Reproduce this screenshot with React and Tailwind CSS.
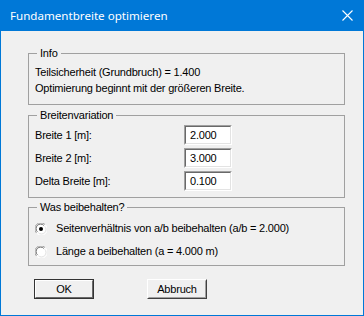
import React from "react";

const body = { fontFamily: '"Liberation Sans", Arial, sans-serif' };

function Radio({ checked }) {
  return (
    <svg width="12" height="12" viewBox="0 0 12 12" className="shrink-0">
      <circle cx="6" cy="6" r="5.5" fill="#fff" />
      <path d="M1.5 10 A5.5 5.5 0 0 1 10 1.5" stroke="#a0a0a0" strokeWidth="1" fill="none" />
      <path d="M2.4 8.8 A4.5 4.5 0 0 1 8.8 2.4" stroke="#696969" strokeWidth="1" fill="none" />
      <path d="M10.5 2 A5.5 5.5 0 0 1 2 10.5" stroke="#ffffff" strokeWidth="1" fill="none" />
      <path d="M9.6 3.2 A4.5 4.5 0 0 1 3.2 9.6" stroke="#e3e3e3" strokeWidth="1" fill="none" />
      {checked && <circle cx="6" cy="6" r="2" fill="#000" />}
    </svg>
  );
}

function Field({ value }) {
  return (
    <div className="h-[20px] w-[48px] border border-t-[#a0a0a0] border-l-[#a0a0a0] border-b-white border-r-white">
      <div className="h-full w-full border border-t-[#696969] border-l-[#696969] border-b-[#e3e3e3] border-r-[#e3e3e3] bg-white pl-[4px] text-[11px] leading-[16px] text-black">
        {value}
      </div>
    </div>
  );
}

export default function App() {
  return (
    <div className="w-[364px] h-[316px] flex flex-col bg-[#f0f0f0]" style={body}>
      <div className="h-[31px] shrink-0 bg-[#0078d7] flex items-center justify-between pl-[10px] pr-[10px] text-white">
        <span className="text-[11.6px]" style={{ fontFamily: '"Noto Sans", sans-serif' }}>
          Fundamentbreite optimieren
        </span>
        <svg width="11" height="11" viewBox="0 0 11 11" className="mr-[1px]">
          <path d="M0.5 0.5 L10.5 10.5 M10.5 0.5 L0.5 10.5" stroke="#fff" strokeWidth="1.1" />
        </svg>
      </div>
      <div className="flex-1 border-x border-b border-[#0078d7] pl-[27px] pt-[15px] text-[11px] tracking-[-0.2px] text-black">
        <fieldset className="w-[317px] border border-[#a0a0a0] px-[6px] pt-[4px] pb-[8px]">
          <legend className="ml-[2px] px-[3px] leading-[14px]">Info</legend>
          <div className="leading-[16px]">Teilsicherheit (Grundbruch) = 1.400</div>
          <div className="leading-[16px]">Optimierung beginnt mit der größeren Breite.</div>
        </fieldset>
        <fieldset className="mt-[3px] w-[317px] border border-[#a0a0a0] px-[6px] pt-[3px] pb-[6px]">
          <legend className="ml-[2px] px-[3px] leading-[14px]">Breitenvariation</legend>
          <div className="grid grid-cols-[149px_48px] gap-y-[3px] items-center">
            <div>Breite 1 [m]:</div>
            <Field value="2.000" />
            <div>Breite 2 [m]:</div>
            <Field value="3.000" />
            <div>Delta Breite [m]:</div>
            <Field value="0.100" />
          </div>
        </fieldset>
        <fieldset className="mt-[2px] w-[317px] border border-[#a0a0a0] px-[6px] pt-[3px] pb-[2px]">
          <legend className="ml-[2px] px-[3px] leading-[14px]">Was beibehalten?</legend>
          <div className="flex flex-col">
            <div className="h-[23px] flex items-center gap-[9px]">
              <Radio checked />
              <span>Seitenverhältnis von a/b beibehalten (a/b = 2.000)</span>
            </div>
            <div className="h-[23px] flex items-center gap-[9px]">
              <Radio />
              <span>Länge a beibehalten (a = 4.000 m)</span>
            </div>
          </div>
        </fieldset>
        <div className="mt-[13px] ml-[6px] flex gap-[53px]">
          <button className="h-[20px] w-[60px] border border-[#333] bg-[#f0f0f0] text-[11px]">
            <div className="h-full w-full border border-t-white border-l-white border-b-[#696969] border-r-[#696969] flex items-center justify-center">
              OK
            </div>
          </button>
          <button className="h-[20px] w-[60px] border border-t-white border-l-white border-b-[#404040] border-r-[#404040] bg-[#f0f0f0] text-[11px]">
            <div className="h-full w-full border border-t-[#f0f0f0] border-l-[#f0f0f0] border-b-[#a0a0a0] border-r-[#a0a0a0] flex items-center justify-center">
              Abbruch
            </div>
          </button>
        </div>
      </div>
    </div>
  );
}
